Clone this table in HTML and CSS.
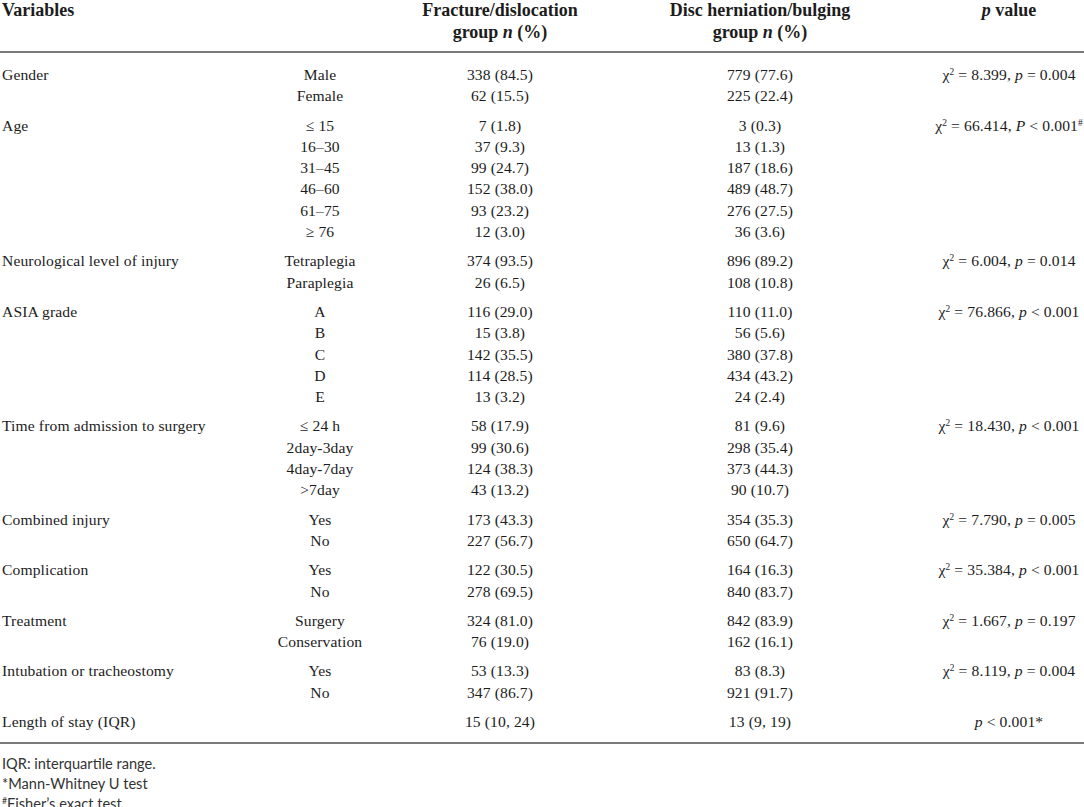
FILE: index.html
```html
<!DOCTYPE html>
<html lang="en">
<head>
<meta charset="utf-8">
<title>Table</title>
<link rel="stylesheet" href="styles.css">
</head>
<body>
<table class="data">
  <colgroup>
    <col class="c1"><col class="c2"><col class="c3"><col class="c4"><col class="c5">
  </colgroup>
  <thead>
    <tr>
      <th class="var">Variables</th>
      <th></th>
      <th>Fracture/dislocation<br>group <i>n</i> (%)</th>
      <th>Disc herniation/bulging<br>group <i>n</i> (%)</th>
      <th class="pv"><i>p</i> value</th>
    </tr>
  </thead>
  <tbody class="grp first">
    <tr><td class="var">Gender</td><td>Male</td><td>338 (84.5)</td><td>779 (77.6)</td><td class="pv">χ<sup>2</sup> = 8.399, <i>p</i> = 0.004</td></tr>
    <tr><td></td><td>Female</td><td>62 (15.5)</td><td>225 (22.4)</td><td class="pv"></td></tr>
  </tbody>
  <tbody class="grp">
    <tr><td class="var">Age</td><td>≤ 15</td><td>7 (1.8)</td><td>3 (0.3)</td><td class="pv">χ<sup>2</sup> = 66.414, <i>P</i> &lt; 0.001<sup>#</sup></td></tr>
    <tr><td></td><td>16–30</td><td>37 (9.3)</td><td>13 (1.3)</td><td class="pv"></td></tr>
    <tr><td></td><td>31–45</td><td>99 (24.7)</td><td>187 (18.6)</td><td class="pv"></td></tr>
    <tr><td></td><td>46–60</td><td>152 (38.0)</td><td>489 (48.7)</td><td class="pv"></td></tr>
    <tr><td></td><td>61–75</td><td>93 (23.2)</td><td>276 (27.5)</td><td class="pv"></td></tr>
    <tr><td></td><td>≥ 76</td><td>12 (3.0)</td><td>36 (3.6)</td><td class="pv"></td></tr>
  </tbody>
  <tbody class="grp">
    <tr><td class="var">Neurological level of injury</td><td>Tetraplegia</td><td>374 (93.5)</td><td>896 (89.2)</td><td class="pv">χ<sup>2</sup> = 6.004, <i>p</i> = 0.014</td></tr>
    <tr><td></td><td>Paraplegia</td><td>26 (6.5)</td><td>108 (10.8)</td><td class="pv"></td></tr>
  </tbody>
  <tbody class="grp">
    <tr><td class="var">ASIA grade</td><td>A</td><td>116 (29.0)</td><td>110 (11.0)</td><td class="pv">χ<sup>2</sup> = 76.866, <i>p</i> &lt; 0.001</td></tr>
    <tr><td></td><td>B</td><td>15 (3.8)</td><td>56 (5.6)</td><td class="pv"></td></tr>
    <tr><td></td><td>C</td><td>142 (35.5)</td><td>380 (37.8)</td><td class="pv"></td></tr>
    <tr><td></td><td>D</td><td>114 (28.5)</td><td>434 (43.2)</td><td class="pv"></td></tr>
    <tr><td></td><td>E</td><td>13 (3.2)</td><td>24 (2.4)</td><td class="pv"></td></tr>
  </tbody>
  <tbody class="grp">
    <tr><td class="var">Time from admission to surgery</td><td>≤ 24 h</td><td>58 (17.9)</td><td>81 (9.6)</td><td class="pv">χ<sup>2</sup> = 18.430, <i>p</i> &lt; 0.001</td></tr>
    <tr><td></td><td>2day-3day</td><td>99 (30.6)</td><td>298 (35.4)</td><td class="pv"></td></tr>
    <tr><td></td><td>4day-7day</td><td>124 (38.3)</td><td>373 (44.3)</td><td class="pv"></td></tr>
    <tr><td></td><td>&gt;7day</td><td>43 (13.2)</td><td>90 (10.7)</td><td class="pv"></td></tr>
  </tbody>
  <tbody class="grp">
    <tr><td class="var">Combined injury</td><td>Yes</td><td>173 (43.3)</td><td>354 (35.3)</td><td class="pv">χ<sup>2</sup> = 7.790, <i>p</i> = 0.005</td></tr>
    <tr><td></td><td>No</td><td>227 (56.7)</td><td>650 (64.7)</td><td class="pv"></td></tr>
  </tbody>
  <tbody class="grp">
    <tr><td class="var">Complication</td><td>Yes</td><td>122 (30.5)</td><td>164 (16.3)</td><td class="pv">χ<sup>2</sup> = 35.384, <i>p</i> &lt; 0.001</td></tr>
    <tr><td></td><td>No</td><td>278 (69.5)</td><td>840 (83.7)</td><td class="pv"></td></tr>
  </tbody>
  <tbody class="grp">
    <tr><td class="var">Treatment</td><td>Surgery</td><td>324 (81.0)</td><td>842 (83.9)</td><td class="pv">χ<sup>2</sup> = 1.667, <i>p</i> = 0.197</td></tr>
    <tr><td></td><td>Conservation</td><td>76 (19.0)</td><td>162 (16.1)</td><td class="pv"></td></tr>
  </tbody>
  <tbody class="grp">
    <tr><td class="var">Intubation or tracheostomy</td><td>Yes</td><td>53 (13.3)</td><td>83 (8.3)</td><td class="pv">χ<sup>2</sup> = 8.119, <i>p</i> = 0.004</td></tr>
    <tr><td></td><td>No</td><td>347 (86.7)</td><td>921 (91.7)</td><td class="pv"></td></tr>
  </tbody>
  <tbody class="grp last">
    <tr><td class="var">Length of stay (IQR)</td><td></td><td>15 (10, 24)</td><td>13 (9, 19)</td><td class="pv"><i>p</i> &lt; 0.001*</td></tr>
  </tbody>
</table>
<div class="notes">
  <p>IQR: interquartile range.</p>
  <p>*Mann-Whitney U test</p>
  <p><sup>#</sup>Fisher’s exact test</p>
</div>
</body>
</html>
```

FILE: styles.css
```css
html, body {
  margin: 0;
  padding: 0;
  background: #ffffff;
}

body {
  font-family: "Liberation Serif", "Times New Roman", serif;
  color: #1c1c1c;
}

.data {
  width: 1084px;
  border-collapse: collapse;
  table-layout: fixed;
  font-size: 15.6px;
  border-bottom: 2px solid #7a7a7a;
}

.c1 { width: 240px; }
.c2 { width: 160px; }
.c3 { width: 200px; }
.c4 { width: 320px; }
.c5 { width: 164px; }

.data th {
  font-size: 18px;
  font-weight: bold;
  line-height: 21.5px;
  text-align: center;
  vertical-align: top;
  padding: 0 0 8px 0;
  border-bottom: 2px solid #7a7a7a;
}

.data th.var {
  text-align: left;
  padding-left: 2px;
}

.data td {
  padding: 0;
  line-height: 21.3px;
  text-align: center;
  white-space: nowrap;
  vertical-align: top;
  letter-spacing: 0.12px;
}

.data td.var {
  text-align: left;
  padding-left: 2px;
}

.data .pv {
  padding-left: 14px;
}

.data sup {
  font-size: 0.6em;
  line-height: 0;
  vertical-align: 0.55em;
}

.grp tr:first-child td {
  padding-top: 4px;
}

.grp tr:last-child td {
  padding-bottom: 4px;
}

.grp.first tr:first-child td {
  padding-top: 11px;
}

.grp.last tr:last-child td {
  padding-bottom: 10px;
}

.notes {
  font-family: "Lato", "Open Sans", sans-serif;
  font-size: 14.6px;
  color: #333333;
  padding: 10px 0 0 2px;
}

.notes p {
  margin: 0;
  line-height: 20px;
}

.notes sup {
  font-size: 0.6em;
  line-height: 0;
  vertical-align: 0.6em;
}
```
